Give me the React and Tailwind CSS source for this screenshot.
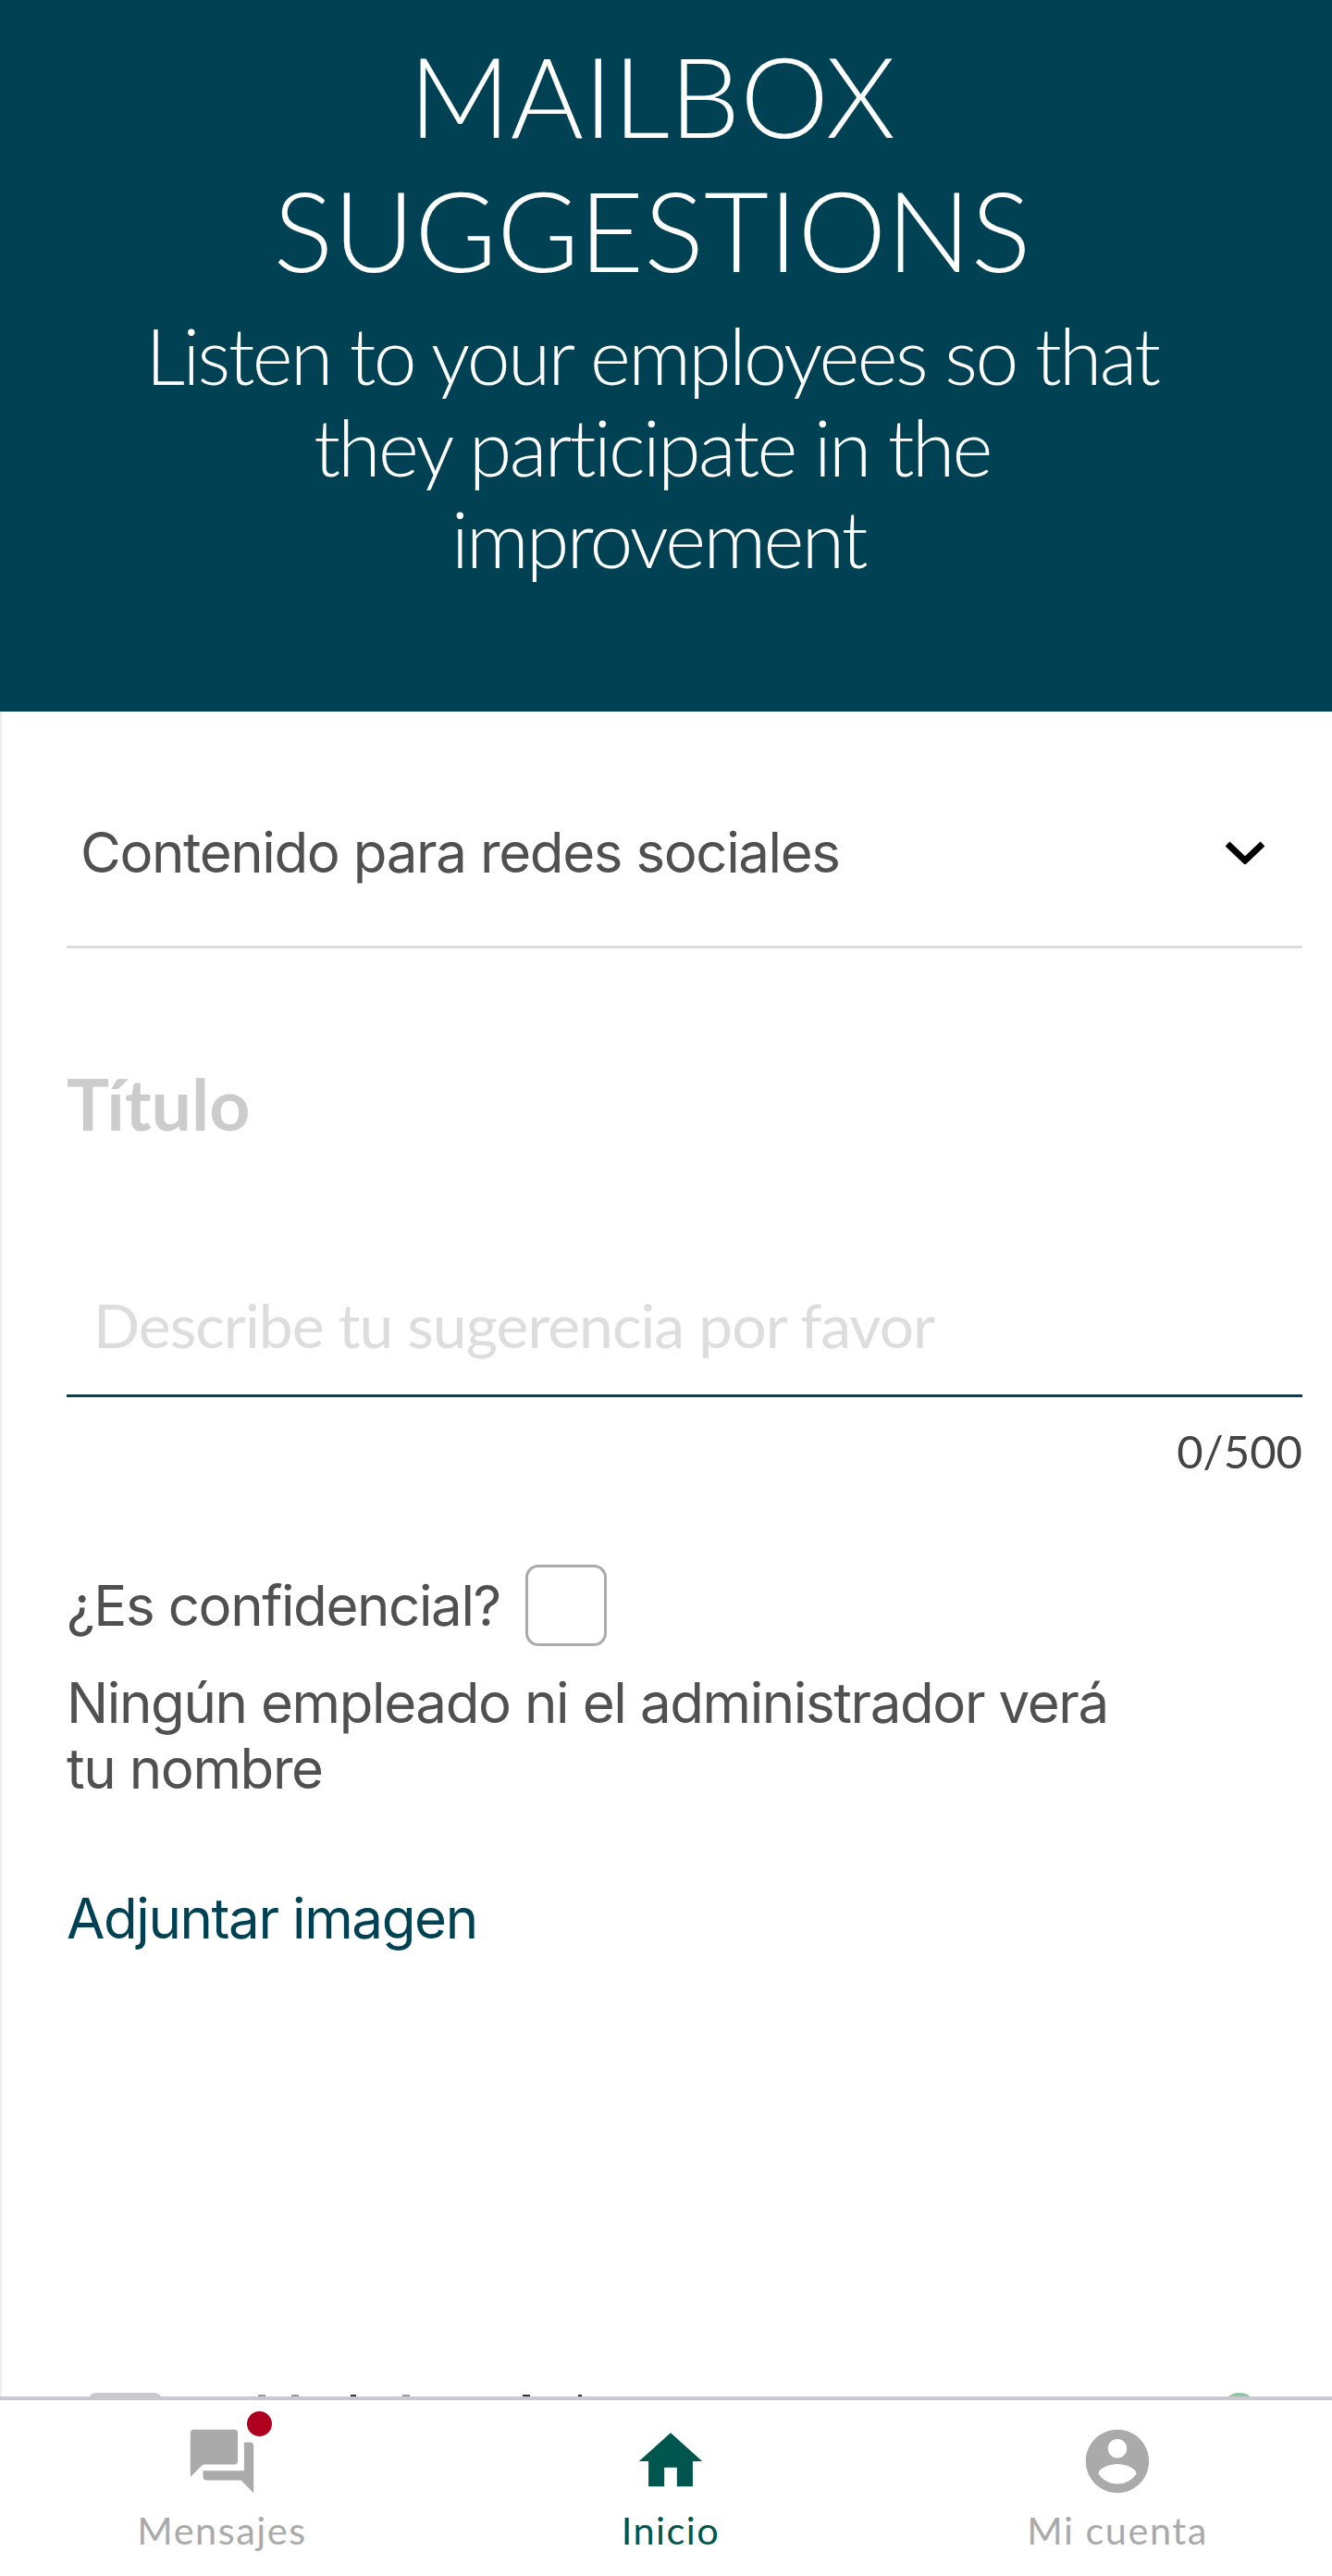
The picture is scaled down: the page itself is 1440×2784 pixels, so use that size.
const Lato = '[font-family:Lato,sans-serif]';

function Forum({ className }) {
  return (
    <svg viewBox="0 0 24 24" className={className} fill="currentColor">
      <path d="M21 6h-2v9H6v2c0 .55.45 1 1 1h11l4 4V7c0-.55-.45-1-1-1zm-4 6V3c0-.55-.45-1-1-1H3c-.55 0-1 .45-1 1v14l4-4h10c.55 0 1-.45 1-1z" />
    </svg>
  );
}
function Home({ className }) {
  return (
    <svg viewBox="0 0 24 24" className={className} fill="currentColor">
      <path d="M10 20v-6h4v6h5v-8h3L12 3 2 12h3v8z" />
    </svg>
  );
}
function Account({ className }) {
  return (
    <svg viewBox="0 0 24 24" className={className} fill="currentColor">
      <path d="M12 2C6.48 2 2 6.48 2 12s4.48 10 10 10 10-4.48 10-10S17.52 2 12 2zm0 3c1.66 0 3 1.34 3 3s-1.34 3-3 3-3-1.34-3-3 1.34-3 3-3zm0 14.2c-2.5 0-4.71-1.28-6-3.22.03-1.99 4-3.08 6-3.08 1.99 0 5.97 1.09 6 3.08-1.29 1.94-3.5 3.22-6 3.22z" />
    </svg>
  );
}

export default function App() {
  return (
    <div className="w-[1440px] h-[2784px] flex flex-col bg-white overflow-hidden">
      <header className={`h-[769px] shrink-0 bg-[#004254] text-white text-center font-light ${Lato} pt-[30px] pr-[30px]`}>
        <h1 className="text-[121px] leading-[145px] font-light">MAILBOX<br />SUGGESTIONS</h1>
        <p className="text-[84px] tracking-[-2.6px] leading-[99px] mt-[14px] font-light">
          Listen to your employees so that<br />they participate in the<br /><span className="pl-[14px]">improvement</span>
        </p>
      </header>

      <main className="flex-1 border-l-2 border-[#eeeeee] pl-[70px] pr-[32px] flex flex-col">
        <div className="h-[256px] border-b-[3px] border-[#dddddd] flex items-center justify-between pl-[15px] pr-[40px] shrink-0 pt-[50px]">
          <span className="font-['Inter',sans-serif] text-[60px] tracking-[-1.4px] leading-[70px] text-[#505050]">Contenido para redes sociales</span>
          <svg viewBox="0 0 44 26" className="w-[44px] h-[26px]" fill="none" stroke="#000" strokeWidth="7"><path d="M3 4l19 18 19-18" /></svg>
        </div>

        <div className={`${Lato} font-bold text-[77px] leading-[80px] text-[#cccccc] mt-[127px]`}>Título</div>

        <div className={`${Lato} h-[278px] border-b-[3px] border-[#004254] text-[66px] tracking-[-0.95px] text-[#dddddd] pl-[29px] pt-[160px] leading-[80px]`}>Describe tu sugerencia por favor</div>

        <div className={`${Lato} text-right text-[49px] leading-[60px] text-[#444444] mt-[28px]`}>0/500</div>

        <div className="flex items-center mt-[93px] h-[88px]">
          <span className="font-['Inter',sans-serif] text-[60px] tracking-[-1.4px] text-[#505050]">¿Es confidencial?</span>
          <span className="ml-[27px] w-[88px] h-[88px] rounded-[14px] border-[3px] border-[#aaaaaa]" />
        </div>

        <p className="font-['Inter',sans-serif] text-[60px] tracking-[-1.4px] leading-[71px] text-[#505050] mt-[26px] w-[1260px]">
          Ningún empleado ni el administrador verá<br />tu nombre
        </p>

        <div className="font-['Inter',sans-serif] text-[60px] tracking-[-1.4px] leading-[71px] text-[#004254] mt-[91px]">Adjuntar imagen</div>

        <div className="mt-auto h-[4px] overflow-hidden flex items-start -ml-[70px] -mr-[32px] relative">
          <span className="shrink-0 ml-[94px] w-[79px] h-[8px] rounded-t-[8px] bg-[#c9c9cf]" />
          <span className="shrink-0 ml-[104px] w-[8px] h-[2px] bg-[#999999] mt-[2px]" />
          <span className="shrink-0 ml-[28px] w-[8px] h-[2px] bg-[#999999] mt-[2px]" />
          <span className="shrink-0 ml-[56px] w-[6px] h-[2px] bg-[#333333] mt-[2px]" />
          <span className="shrink-0 ml-[50px] w-[8px] h-[2px] bg-[#999999] mt-[2px]" />
          <span className="shrink-0 ml-[122px] w-[8px] h-[2px] bg-[#333333] mt-[2px]" />
          <span className="shrink-0 ml-[52px] w-[4px] h-[2px] bg-[#333333] mt-[2px]" />
          <span className="shrink-0 ml-[694px] w-[34px] h-[16px] rounded-t-full bg-[#8cc7a0]" />
        </div>
      </main>

      <nav className={`${Lato} h-[194px] shrink-0 border-t-[4px] border-[#c8c8d0] grid grid-cols-[480px_490px_1fr] text-[41.5px] tracking-[1.5px] leading-[48px] text-center`}>
        <div className="flex flex-col items-center text-[#aaaaaa] pt-[25px]">
          <div className="relative w-[82px] h-[82px]">
            <Forum className="w-[82px] h-[82px]" />
            <span className="absolute -top-[13px] left-[68px] w-[27px] h-[27px] rounded-full bg-[#b00020]" />
          </div>
          <span className="mt-[9px]">Mensajes</span>
        </div>
        <div className="flex flex-col items-center text-[#00564f] pt-[25px]">
          <Home className="w-[82px] h-[82px]" />
          <span className="mt-[9px]">Inicio</span>
        </div>
        <div className="flex flex-col items-center text-[#aaaaaa] pt-[25px] pl-[6px]">
          <Account className="w-[82px] h-[82px]" />
          <span className="mt-[9px]">Mi cuenta</span>
        </div>
      </nav>
    </div>
  );
}
